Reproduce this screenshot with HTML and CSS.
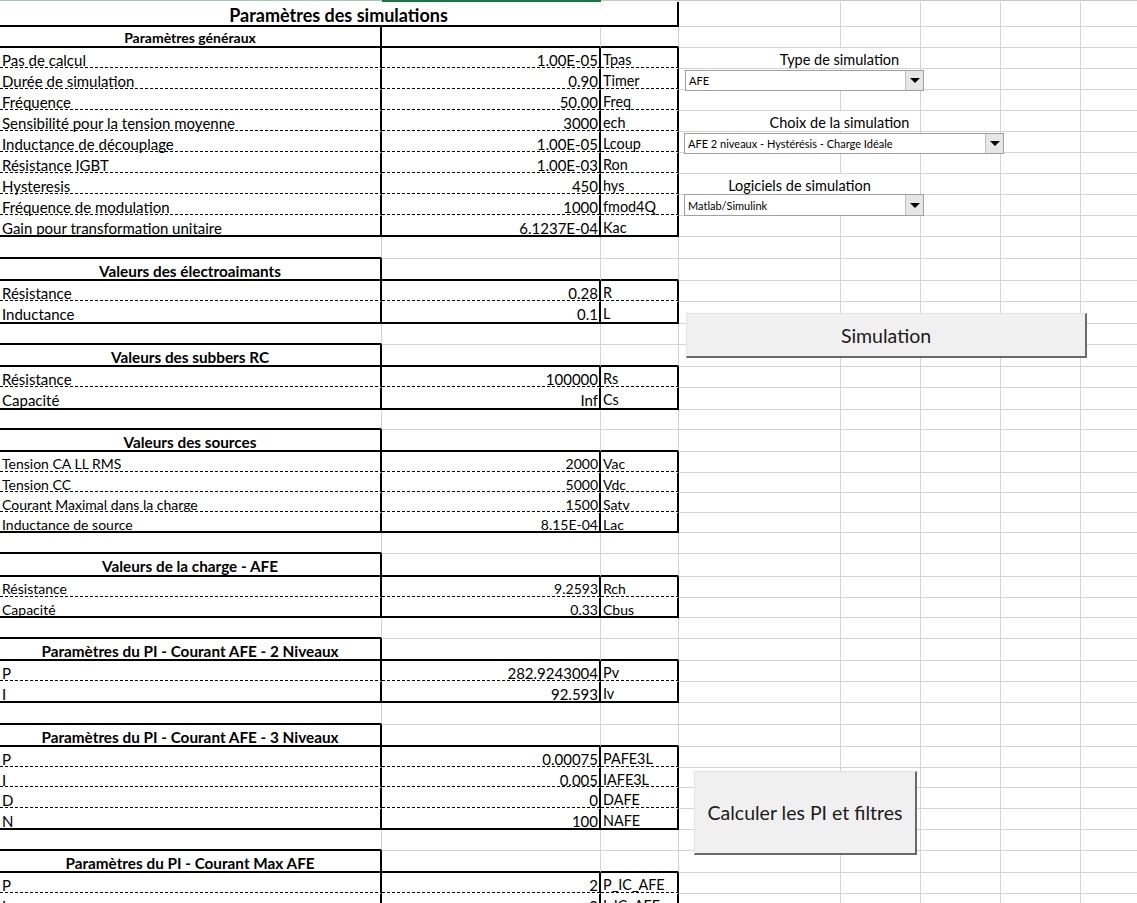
FILE: index.html
```html
<!DOCTYPE html>
<html lang="fr">
<head>
<meta charset="utf-8">
<title>Paramètres des simulations</title>
<link rel="stylesheet" href="styles.css">
</head>
<body>
<div class="sheet">
  <div class="top"><div class="top-a"></div><div class="top-b"></div><div class="top-rest"></div></div>

  <div class="r h25"><div class="c cabc tb tr title">Paramètres des simulations</div><div class="c cd"></div><div class="rest"></div></div>
  <div class="r h21"><div class="c ca tb tr hd hd-sm">Paramètres généraux</div><div class="c cb tb"></div><div class="c cc tb"></div><div class="c cd"></div><div class="rest"></div></div>

  <div class="r h21"><div class="c ca tr db lbl">Pas de calcul</div><div class="c cb tr db num">1.00E-05</div><div class="c cc tr db nm">Tpas</div><div class="c cde spill shift">Type de simulation</div><div class="rest"></div></div>
  <div class="r h21"><div class="c ca tr db lbl">Durée de simulation</div><div class="c cb tr db num">0.90</div><div class="c cc tr db nm">Timer</div><div class="c cd"></div><div class="rest"></div></div>
  <div class="r h21"><div class="c ca tr db lbl">Fréquence</div><div class="c cb tr db num">50.00</div><div class="c cc tr db nm">Freq</div><div class="c cd"></div><div class="rest"></div></div>
  <div class="r h21"><div class="c ca tr db lbl">Sensibilité pour la tension moyenne</div><div class="c cb tr db num">3000</div><div class="c cc tr db nm">ech</div><div class="c cde spill shift">Choix de la simulation</div><div class="rest"></div></div>
  <div class="r h21"><div class="c ca tr db lbl">Inductance de découplage</div><div class="c cb tr db num">1.00E-05</div><div class="c cc tr db nm">Lcoup</div><div class="c cd"></div><div class="rest"></div></div>
  <div class="r h21"><div class="c ca tr db lbl">Résistance IGBT</div><div class="c cb tr db num">1.00E-03</div><div class="c cc tr db nm">Ron</div><div class="c cd"></div><div class="rest"></div></div>
  <div class="r h21"><div class="c ca tr db lbl">Hysteresis</div><div class="c cb tr db num">450</div><div class="c cc tr db nm">hys</div><div class="c cde spill">Logiciels de simulation</div><div class="rest"></div></div>
  <div class="r h21"><div class="c ca tr db lbl">Fréquence de modulation</div><div class="c cb tr db num">1000</div><div class="c cc tr db nm">fmod4Q</div><div class="c cd"></div><div class="rest"></div></div>
  <div class="r h21"><div class="c ca tr tb lbl">Gain pour transformation unitaire</div><div class="c cb tr tb num">6.1237E-04</div><div class="c cc tr tb nm">Kac</div><div class="c cd"></div><div class="rest"></div></div>

  <div class="r h22"><div class="c ca tb"></div><div class="c cb"></div><div class="c cc"></div><div class="c cd"></div><div class="rest"></div></div>
  <div class="r h22"><div class="c ca tb tr hd">Valeurs des électroaimants</div><div class="c cb tb"></div><div class="c cc tb"></div><div class="c cd"></div><div class="rest"></div></div>
  <div class="r h21"><div class="c ca tr db lbl">Résistance</div><div class="c cb tr db num">0.28</div><div class="c cc tr db nm">R</div><div class="c cd"></div><div class="rest"></div></div>
  <div class="r h22"><div class="c ca tr tb lbl">Inductance</div><div class="c cb tr tb num">0.1</div><div class="c cc tr tb nm">L</div><div class="c cd"></div><div class="rest"></div></div>

  <div class="r h21"><div class="c ca tb"></div><div class="c cb"></div><div class="c cc"></div><div class="c cd"></div><div class="rest"></div></div>
  <div class="r h22"><div class="c ca tb tr hd">Valeurs des subbers RC</div><div class="c cb tb"></div><div class="c cc tb"></div><div class="c cd"></div><div class="rest"></div></div>
  <div class="r h21"><div class="c ca tr db lbl">Résistance</div><div class="c cb tr db num">100000</div><div class="c cc tr db nm">Rs</div><div class="c cd"></div><div class="rest"></div></div>
  <div class="r h22"><div class="c ca tr tb lbl">Capacité</div><div class="c cb tr tb num">Inf</div><div class="c cc tr tb nm">Cs</div><div class="c cd"></div><div class="rest"></div></div>

  <div class="r h20"><div class="c ca tb"></div><div class="c cb"></div><div class="c cc"></div><div class="c cd"></div><div class="rest"></div></div>
  <div class="r h22"><div class="c ca tb tr hd">Valeurs des sources</div><div class="c cb tb"></div><div class="c cc tb"></div><div class="c cd"></div><div class="rest"></div></div>
  <div class="r h21 sm"><div class="c ca tr db lbl">Tension CA LL RMS</div><div class="c cb tr db num">2000</div><div class="c cc tr db nm">Vac</div><div class="c cd"></div><div class="rest"></div></div>
  <div class="r h20 sm"><div class="c ca tr db lbl">Tension CC</div><div class="c cb tr db num">5000</div><div class="c cc tr db nm">Vdc</div><div class="c cd"></div><div class="rest"></div></div>
  <div class="r h20 sm"><div class="c ca tr db lbl">Courant Maximal dans la charge</div><div class="c cb tr db num">1500</div><div class="c cc tr db nm">Satv</div><div class="c cd"></div><div class="rest"></div></div>
  <div class="r h20 sm"><div class="c ca tr tb lbl">Inductance de source</div><div class="c cb tr tb num">8.15E-04</div><div class="c cc tr tb nm">Lac</div><div class="c cd"></div><div class="rest"></div></div>

  <div class="r h21"><div class="c ca tb"></div><div class="c cb"></div><div class="c cc"></div><div class="c cd"></div><div class="rest"></div></div>
  <div class="r h23"><div class="c ca tb tr hd">Valeurs de la charge - AFE</div><div class="c cb tb"></div><div class="c cc tb"></div><div class="c cd"></div><div class="rest"></div></div>
  <div class="r h21 sm"><div class="c ca tr db lbl">Résistance</div><div class="c cb tr db num">9.2593</div><div class="c cc tr db nm">Rch</div><div class="c cd"></div><div class="rest"></div></div>
  <div class="r h20 sm"><div class="c ca tr tb lbl">Capacité</div><div class="c cb tr tb num">0.33</div><div class="c cc tr tb nm">Cbus</div><div class="c cd"></div><div class="rest"></div></div>

  <div class="r h21"><div class="c ca tb"></div><div class="c cb"></div><div class="c cc"></div><div class="c cd"></div><div class="rest"></div></div>
  <div class="r h22"><div class="c ca tb tr hd">Paramètres du PI - Courant AFE - 2 Niveaux</div><div class="c cb tb"></div><div class="c cc tb"></div><div class="c cd"></div><div class="rest"></div></div>
  <div class="r h21"><div class="c ca tr db lbl">P</div><div class="c cb tr db num">282.9243004</div><div class="c cc tr db nm">Pv</div><div class="c cd"></div><div class="rest"></div></div>
  <div class="r h21"><div class="c ca tr tb lbl">I</div><div class="c cb tr tb num">92.593</div><div class="c cc tr tb nm">Iv</div><div class="c cd"></div><div class="rest"></div></div>

  <div class="r h22"><div class="c ca tb"></div><div class="c cb"></div><div class="c cc"></div><div class="c cd"></div><div class="rest"></div></div>
  <div class="r h22"><div class="c ca tb tr hd">Paramètres du PI - Courant AFE - 3 Niveaux</div><div class="c cb tb"></div><div class="c cc tb"></div><div class="c cd"></div><div class="rest"></div></div>
  <div class="r h21"><div class="c ca tr db lbl">P</div><div class="c cb tr db num">0.00075</div><div class="c cc tr db nm">PAFE3L</div><div class="c cd"></div><div class="rest"></div></div>
  <div class="r h20"><div class="c ca tr db lbl">I</div><div class="c cb tr db num">0.005</div><div class="c cc tr db nm">IAFE3L</div><div class="c cd"></div><div class="rest"></div></div>
  <div class="r h21"><div class="c ca tr db lbl">D</div><div class="c cb tr db num">0</div><div class="c cc tr db nm">DAFE</div><div class="c cd"></div><div class="rest"></div></div>
  <div class="r h21"><div class="c ca tr tb lbl">N</div><div class="c cb tr tb num">100</div><div class="c cc tr tb nm">NAFE</div><div class="c cd"></div><div class="rest"></div></div>

  <div class="r h21"><div class="c ca tb"></div><div class="c cb"></div><div class="c cc"></div><div class="c cd"></div><div class="rest"></div></div>
  <div class="r h22"><div class="c ca tb tr hd">Paramètres du PI - Courant Max AFE</div><div class="c cb tb"></div><div class="c cc tb"></div><div class="c cd"></div><div class="rest"></div></div>
  <div class="r h21"><div class="c ca tr db lbl">P</div><div class="c cb tr db num">2</div><div class="c cc tr db nm">P_IC_AFE</div><div class="c cd"></div><div class="rest"></div></div>
  <div class="r h21"><div class="c ca tr db lbl">I</div><div class="c cb tr db num">0</div><div class="c cc tr db nm">I_IC_AFE</div><div class="c cd"></div><div class="rest"></div></div>

  <div class="dd dd-type"><span class="dd-text">AFE</span><span class="dd-btn"><span class="tri"></span></span></div>
  <div class="dd dd-choix"><span class="dd-text">AFE 2 niveaux - Hystérésis - Charge Idéale</span><span class="dd-btn"><span class="tri"></span></span></div>
  <div class="dd dd-log"><span class="dd-text">Matlab/Simulink</span><span class="dd-btn"><span class="tri"></span></span></div>

  <div class="btn btn-sim">Simulation</div>
  <div class="btn btn-calc">Calculer les PI et filtres</div>
</div>
</body>
</html>
```

FILE: styles.css
```css
html, body {
  margin: 0;
  padding: 0;
  background: #ffffff;
}
body {
  font-family: Lato, "Liberation Sans", sans-serif;
  color: #000;
  overflow: hidden;
}
.sheet {
  position: relative;
  width: 1137px;
  height: 903px;
  overflow: hidden;
}
.top {
  display: flex;
  height: 2px;
}
.top-a {
  width: 382px;
  border-top: 1px solid #a8c8b4;
  box-sizing: border-box;
}
.top-b {
  width: 219px;
  background: #217346;
}
.top-rest {
  flex: 1;
  border-top: 1px solid #c6c6c6;
  box-sizing: border-box;
}
.r {
  display: flex;
  width: 1137px;
}
.h20 { height: 20px; }
.h21 { height: 21px; }
.h22 { height: 22px; }
.h23 { height: 23px; }
.h25 { height: 25px; }

.c {
  box-sizing: border-box;
  flex: none;
  height: 100%;
  border-right: 1px solid #d4d4d4;
  border-bottom: 1px solid #d4d4d4;
  white-space: nowrap;
  display: flex;
  align-items: flex-start;
  font-size: 15px;
  line-height: 16px;
  padding-top: 4px;
}
.ca { width: 382px; }
.cb { width: 219px; }
.cc { width: 78px; }
.cd { width: 162px; }
.cabc { width: 679px; }
.cde { width: 242px; }
.rest {
  flex: 1;
  height: 100%;
  box-sizing: border-box;
  border-bottom: 1px solid #d4d4d4;
  background: repeating-linear-gradient(to right, transparent 0 79px, #d4d4d4 79px 80px);
}

.tb { border-bottom: 2px solid #000; }
.tr { border-right: 2px solid #000; }
.db {
  border-bottom: 1px solid transparent;
  background: repeating-linear-gradient(to right, #000 0 3px, transparent 3px 5px) left bottom / 100% 1px no-repeat;
}

.title {
  justify-content: center;
  font-weight: 700;
  font-size: 18px;
  line-height: 20px;
  padding-top: 3px;
}
.hd {
  justify-content: center;
  font-weight: 700;
  font-size: 15.3px;
}
.hd.hd-sm { font-size: 14px; padding-top: 3px; }
.lbl { padding-left: 2px; }
.num { justify-content: flex-end; padding-right: 1px; }
.nm { padding-left: 2px; font-size: 14.4px; }
.sm .c { font-size: 14px; }

.spill {
  justify-content: center;
  font-size: 14.5px;
}
.shift { padding-left: 80px; }

/* dropdowns */
.dd {
  position: absolute;
  box-sizing: border-box;
  display: flex;
  align-items: center;
  background: #fff;
  border: 1px solid #a0a0a0;
  font-size: 11px;
  line-height: 13px;
}
.dd-text {
  flex: 1;
  padding-left: 3px;
  white-space: nowrap;
}
.dd-btn {
  width: 18px;
  height: 100%;
  box-sizing: border-box;
  background: #e6e6e6;
  border-left: 1px solid #c0c0c0;
  display: flex;
  align-items: center;
  justify-content: center;
}
.tri {
  width: 0;
  height: 0;
  border-left: 5px solid transparent;
  border-right: 5px solid transparent;
  border-top: 5px solid #000;
}
.dd-type { left: 685px; top: 70px; width: 239px; height: 21px; }
.dd-choix { left: 684px; top: 133px; width: 320px; height: 21px; }
.dd-log { left: 684px; top: 194px; width: 240px; height: 22px; }

/* buttons */
.btn {
  position: absolute;
  box-sizing: border-box;
  display: flex;
  align-items: center;
  justify-content: center;
  background: #f0f0f0;
  border-top: 1px solid #e3e3e3;
  border-left: 1px solid #e3e3e3;
  border-right: 2px solid #6a6a6a;
  border-bottom: 2px solid #6a6a6a;
  font-size: 19.5px;
  color: #1a1a1a;
}
.btn-sim { left: 686px; top: 313px; width: 401px; height: 45px; }
.btn-calc { left: 694px; top: 771px; width: 223px; height: 84px; }
```
